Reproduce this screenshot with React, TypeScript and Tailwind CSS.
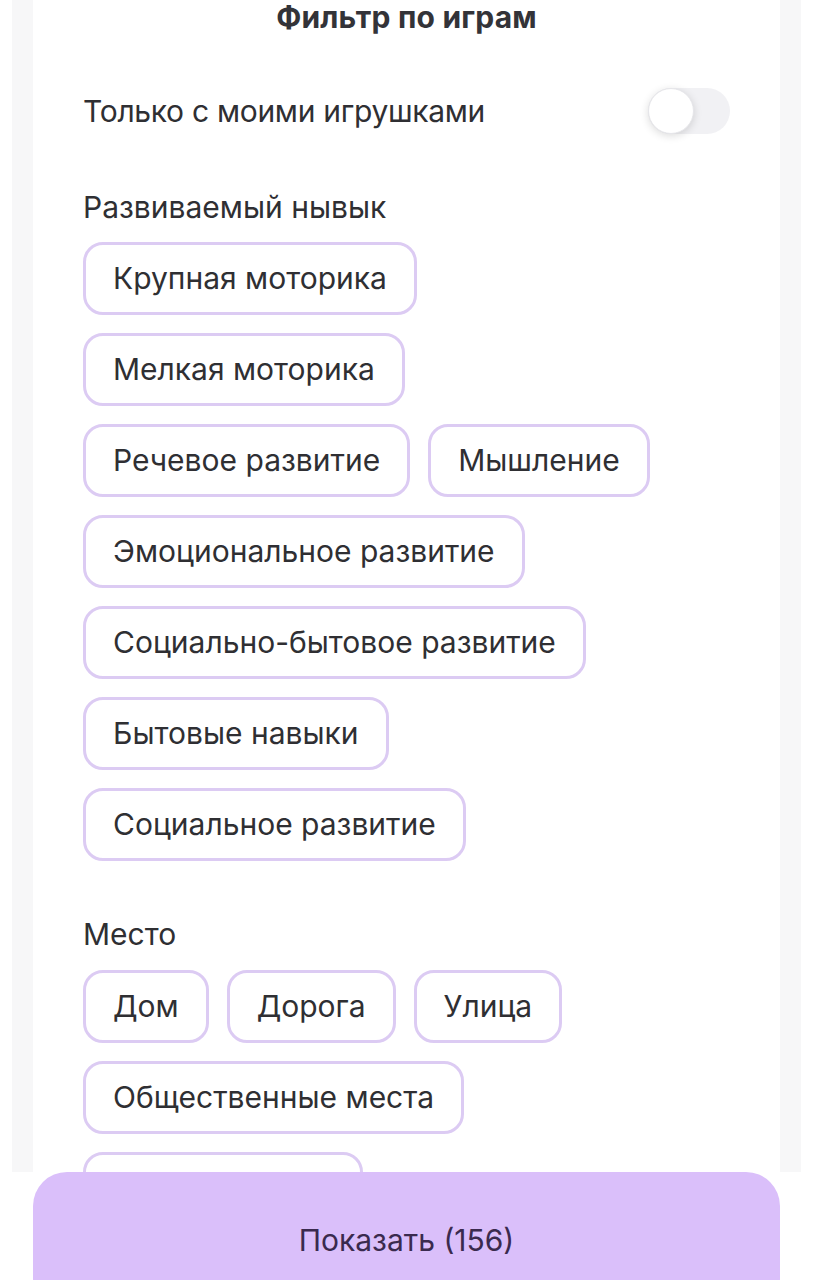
import { useState } from "react";

const skills = [
  "Крупная моторика",
  "Мелкая моторика",
  "Речевое развитие",
  "Мышление",
  "Эмоциональное развитие",
  "Социально-бытовое развитие",
  "Бытовые навыки",
  "Социальное развитие",
];

const places = ["Дом", "Дорога", "Улица", "Общественные места", "Детский садик"];

function Chip({ label }: { label: string }) {
  return (
    <button className="h-[73px] px-[27px] flex items-center rounded-[20px] border-[3px] border-[#dccbf3] bg-white text-[30px] text-[#2f2f33]">
      {label}
    </button>
  );
}

export default function App() {
  const [onlyMine, setOnlyMine] = useState(false);

  return (
    <div className="h-[1280px] overflow-hidden bg-white flex flex-col font-['Inter',sans-serif]">
      {/* карточка фильтра */}
      <div className="h-[1172px] shrink-0 px-3">
        <div className="h-full bg-[#f7f7f8] px-[21px]">
          <div className="h-full bg-white px-[50px] overflow-hidden">
            <h1 className="text-center text-[30px] leading-[34px] font-bold text-[#333338] tracking-[0.2px]">
              Фильтр по играм
            </h1>

            <div className="mt-[54px] flex items-center justify-between">
              <span className="text-[30px] leading-[46px] text-[#2f2f33] tracking-[-0.3px]">
                Только с моими игрушками
              </span>
              <button
                onClick={() => setOnlyMine(!onlyMine)}
                className="relative w-[82px] h-[46px] rounded-full bg-[#f1f1f4]"
              >
                <span className="absolute left-0 top-0 w-[46px] h-[46px] rounded-full bg-white border border-[#e6e6ea] shadow-[0_2px_8px_rgba(0,0,0,0.14)]" />
              </button>
            </div>

            <div className="mt-[55px] text-[30px] leading-[36px] text-[#2f2f33]">
              Развиваемый нывык
            </div>
            <div className="mt-[17px] flex flex-wrap gap-[18px]">
              {skills.map((s) => (
                <Chip key={s} label={s} />
              ))}
            </div>

            <div className="mt-[55px] text-[30px] leading-[36px] text-[#2f2f33]">
              Место
            </div>
            <div className="mt-[18px] flex flex-wrap gap-[18px]">
              {places.map((p) => (
                <Chip key={p} label={p} />
              ))}
            </div>
          </div>
        </div>
      </div>

      {/* кнопка */}
      <div className="px-[33px]">
        <button className="w-full h-[140px] rounded-[34px] bg-[#dabffa] text-[30px] text-[#3a2a4e] pb-[3px]">
          Показать (156)
        </button>
      </div>
    </div>
  );
}
